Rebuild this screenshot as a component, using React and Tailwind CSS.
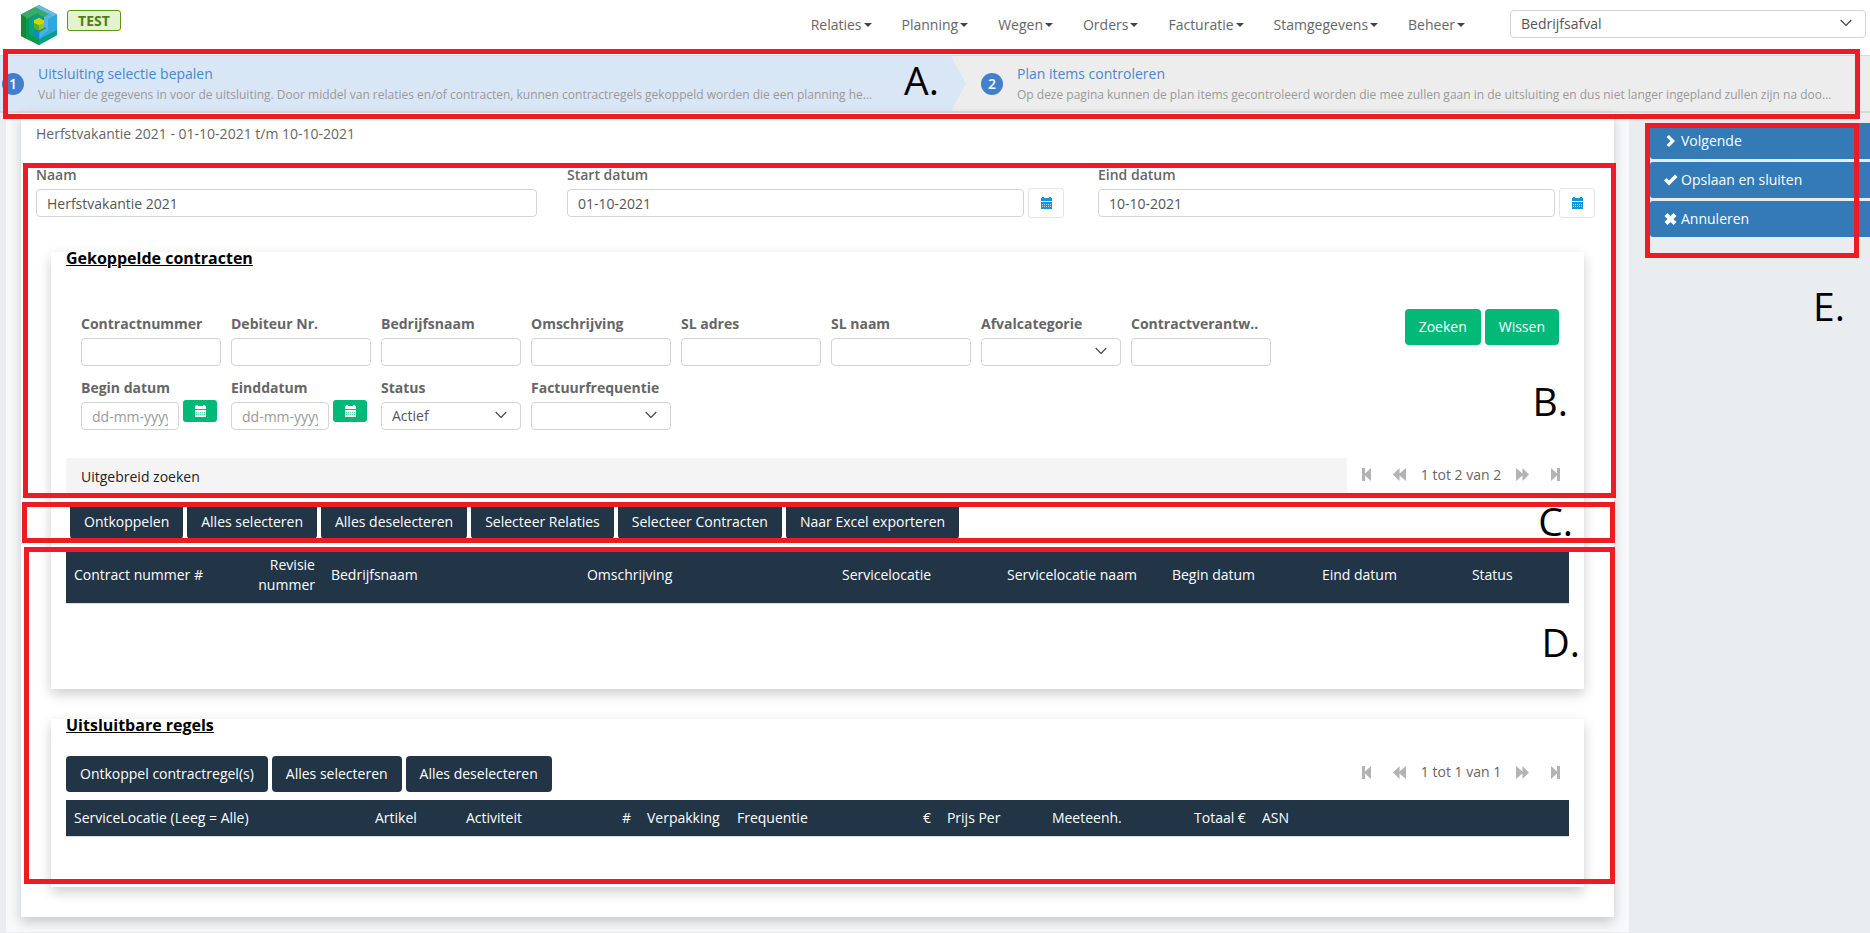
import React from "react";

const fieldBox = "h-7 w-full rounded-[4px] border border-[#d4d4d4] bg-white px-[10px] text-sm text-[#555] placeholder:text-[#999]";
const navy = "h-9 cursor-pointer rounded-[4px] bg-[#213547] px-[14px] pt-px text-sm text-white";
const card = "mx-[30px] bg-white px-[15px] shadow-[0_5px_12px_rgba(0,0,0,0.2)]";

function Logo() {
  return (
    <svg width="36" height="40" viewBox="0 0 36 40" role="img" aria-label="Logo">
      <path d="M18 0 36 9.5V30L18 40 0 31V9.5Z" fill="#129a63" />
      <path d="M0 9.5 5 12V33.500L0 31Z" fill="#128a35" />
      <path d="M0 9.5 14 2 28 9 23 12 16 8.500 5 14V12Z" fill="#3aab66" />
      <path d="M14 2 18 0 36 9.500 31 12 28 9Z" fill="#63bbe8" />
      <path d="M36 9.500V25L18 34.500V29L27 24V12L31 12Z" fill="#2fa8e0" />
      <path d="M28 9 31 12 27 14V24L23 22V12Z" fill="#58b4e6" />
      <path d="M36 25.500V30L18 40V35Z" fill="#00a18a" />
      <path d="M5 33.500 18 40V35L8 30V14L5 14Z" fill="#0a9a4e" />
      <path d="M8 14 16 9.500 23 12 13 17V31L8 29.500Z" fill="#00a28a" />
      <path d="M13.500 24 18.500 27V33.500L13.500 31Z" fill="#1586cf" />
      <path d="M18.500 27 27 22.500V25.500L18.500 33Z" fill="#4cb3e8" />
      <path d="M13 15.500 18 13 23 15.500V23L18 25.500 13 23Z" fill="#9cc21e" />
      <path d="M13 15.500 18 18V25.500L13 23Z" fill="#5cab2c" />
      <path d="M13 15.500 18 13 23 15.500V18L18 20 13 18Z" fill="#d3d800" />
    </svg>
  );
}

function Chevron() {
  return (
    <svg width="12" height="8" viewBox="0 0 12 8" className="pointer-events-none absolute top-[9px] right-[14px]" aria-hidden="true">
      <path d="M.7 1 6 6.500 11.300 1" fill="none" stroke="#444" strokeWidth="1.200" />
    </svg>
  );
}

function Calendar({ color }) {
  return (
    <svg width="11" height="12" viewBox="0 0 11 12" aria-hidden="true">
      <path d="M0 1h1V0h2v1h5V0h2v1h1v3H0Z" fill={color} />
      <path d="M0 5h11v7H0Z" fill={color} />
      <path d="M1 7.500h9M1 9.500h9" stroke={color === "#fff" ? "#03b978" : "#fff"} strokeWidth="1" strokeDasharray="1 1" opacity=".7" />
    </svg>
  );
}

function Select({ id, value, label }) {
  return (
    <div className="relative">
      <select id={id} aria-label={label} className={fieldBox + " appearance-none"} defaultValue={value}>
        <option>{value}</option>
      </select>
      <Chevron />
    </div>
  );
}

const menus = ["Relaties", "Planning", "Wegen", "Orders", "Facturatie", "Stamgegevens", "Beheer"];

function Header() {
  return (
    <header className="flex h-[55px] items-start bg-white pr-1 pl-[21px]">
      <a href="#home" className="mt-[5px]"><Logo /></a>
      <span className="mt-[10px] ml-[10px] flex h-[21px] w-[54px] items-center justify-center rounded-[3px] border border-[#5a9610] bg-[#e3f2cf] text-sm font-bold text-[#4d8010]">TEST</span>
      <nav className="mr-[45px] ml-auto flex h-[50px] items-center gap-[30px]">
        {menus.map((m) => (
          <button key={m} type="button" className="flex cursor-pointer items-center gap-[2px] text-sm text-[#666]">
            {m}
            <svg width="8" height="4" viewBox="0 0 8 4" aria-hidden="true"><path d="M0 0h8L4 4Z" fill="#444" /></svg>
          </button>
        ))}
      </nav>
      <div className="mt-[10px] w-[356px]"><Select id="afdeling" label="Afdeling" value="Bedrijfsafval" /></div>
    </header>
  );
}

function Step({ number, title, text }) {
  return (
    <a href={"#stap-" + number} className="flex min-w-0 items-center">
      <span className="mr-[14px] flex size-[22px] shrink-0 items-center justify-center rounded-full bg-[#4380cc] text-sm font-semibold text-white">{number}</span>
      <span className="block min-w-0 pt-[2px]">
        <span className="block text-sm leading-5 text-[#4a86cf]">{title}</span>
        <span className="block truncate text-[12px] leading-[22px] text-[#999]">{text}</span>
      </span>
    </a>
  );
}

function Wizard() {
  return (
    <div className="flex h-[58px] border-t border-b-2 border-[#d9d9d9] bg-[#ededed]">
      <div className="flex w-[951px] shrink-0 bg-[#d9e6f6] pr-[50px] pl-[2px]">
        <Step number="1" title="Uitsluiting selectie bepalen" text="Vul hier de gegevens in voor de uitsluiting. Door middel van relaties en/of contracten, kunnen contractregels gekoppeld worden die een planning he…" />
      </div>
      <svg width="15" height="55" viewBox="0 0 15 55" className="shrink-0" aria-hidden="true"><path d="M0 0 15 27.500 0 55Z" fill="#d9e6f6" /></svg>
      <div className="flex min-w-0 flex-1 pr-5 pl-[15px]">
        <Step number="2" title="Plan items controleren" text="Op deze pagina kunnen de plan items gecontroleerd worden die mee zullen gaan in de uitsluiting en dus niet langer ingepland zullen zijn na doo…" />
      </div>
    </div>
  );
}

function DateField({ id, label, value }) {
  return (
    <div className="pr-[19px] pl-[15px]">
      <label htmlFor={id} className="block h-6 text-sm leading-5 font-semibold text-[#666]">{label}</label>
      <div className="flex items-center gap-1">
        <input id={id} className={fieldBox} defaultValue={value} />
        <button type="button" aria-label={label + " kiezen"} className="-my-px flex h-[30px] w-9 shrink-0 cursor-pointer items-center justify-center rounded-[3px] border border-[#e5e5e5] bg-white">
          <Calendar color="#1296db" />
        </button>
      </div>
    </div>
  );
}

const filters = [
  ["Contractnummer", "text"], ["Debiteur Nr.", "text"], ["Bedrijfsnaam", "text"], ["Omschrijving", "text"],
  ["SL adres", "text"], ["SL naam", "text"], ["Afvalcategorie", "select", ""], ["Contractverantw..", "text"],
  ["Begin datum", "date"], ["Einddatum", "date"], ["Status", "select", "Actief"], ["Factuurfrequentie", "select", ""],
];

function Filter({ label, kind, value, id }) {
  return (
    <div className="h-16 w-[140px]">
      <label htmlFor={id} className="block h-6 text-sm leading-5 font-bold text-[#666]">{label}</label>
      {kind === "text" && <input id={id} className={fieldBox} />}
      {kind === "select" && <Select id={id} value={value} />}
      {kind === "date" && (
        <div className="flex items-start gap-1">
          <div className="w-[98px]"><input id={id} placeholder="dd-mm-yyyy" className={fieldBox} /></div>
          <button type="button" aria-label={label + " kiezen"} className="-mt-[2px] flex h-[22px] w-[34px] cursor-pointer items-center justify-center rounded-[3px] bg-[#03b978]">
            <Calendar color="#fff" />
          </button>
        </div>
      )}
    </div>
  );
}

function Pager({ text }) {
  const arrow = "flex h-5 cursor-pointer items-center";
  return (
    <div className="flex w-[207px] shrink-0 items-center justify-between pr-[9px] pt-px text-sm text-[#666]">
      <button type="button" aria-label="Eerste" className={arrow}><svg width="9" height="13" viewBox="0 0 9 13"><path d="M0 0h3v5.500L9 0v13L3 7.500V13H0Z" fill="#b3b3b3" /></svg></button>
      <div className="flex items-center gap-[15px]">
        <button type="button" aria-label="Vorige" className={arrow}><svg width="13" height="13" viewBox="0 0 13 13"><path d="M0 6.500 6.500 0v5.500L13 0v13L6.500 7.500V13Z" fill="#b3b3b3" /></svg></button>
        <span>{text}</span>
        <button type="button" aria-label="Volgende" className={arrow}><svg width="13" height="13" viewBox="0 0 13 13"><path d="M13 6.500 6.500 0v5.500L0 0v13L6.500 7.500V13Z" fill="#b3b3b3" /></svg></button>
      </div>
      <button type="button" aria-label="Laatste" className={arrow}><svg width="9" height="13" viewBox="0 0 9 13"><path d="M9 0H6v5.500L0 0v13L6 7.500V13h3Z" fill="#b3b3b3" /></svg></button>
    </div>
  );
}

const contractColumns = [
  ["Contract nummer #", 165], ["Revisie nummer", 92, true], ["Bedrijfsnaam", 256], ["Omschrijving", 255], ["Servicelocatie", 165],
  ["Servicelocatie naam", 165], ["Begin datum", 150], ["Eind datum", 150], ["Status", 105],
];
const lineColumns = [
  ["ServiceLocatie (Leeg = Alle)", 301], ["Artikel", 91], ["Activiteit", 121], ["#", 60, true], ["Verpakking", 90], ["Frequentie", 120],
  ["€", 90, true], ["Prijs Per", 105], ["Meeteenh.", 105], ["Totaal €", 105, true], ["ASN", 315],
];

function HeadTable({ columns, tall, label }) {
  return (
    <table aria-label={label} className="w-full table-fixed border-b border-[#ddd] bg-[#213547] text-sm leading-5 text-white">
      <colgroup>{columns.map(([n, w]) => <col key={n} style={{ width: (w / 15.03) + "%" }} />)}</colgroup>
      <thead>
        <tr className={tall ? "h-[56px]" : "h-[37px]"}>
          {columns.map(([n, , right]) => (
            <th key={n} className={right ? "px-2 text-right font-normal" : "px-2 text-left font-normal whitespace-nowrap"}>{n}</th>
          ))}
        </tr>
      </thead>
    </table>
  );
}

function Buttons({ names }) {
  return (
    <div className="flex gap-1">
      {names.map((n) => <button key={n} type="button" className={navy}>{n}</button>)}
    </div>
  );
}

const actions = [
  ["Volgende", "M2.500 2 5 0 11 6 5 12 2.500 10 6.500 6Z"],
  ["Opslaan en sluiten", "M0 6.500 2.500 4 5 6.500 11 .5 13.500 3 5 11.500Z"],
  ["Annuleren", "M.5 3 3.500 0 6.500 3 9.500 0 12.500 3 9.500 6 12.500 9 9.500 12 6.500 9 3.500 12 .5 9 3.500 6Z"],
];

const frame = "pointer-events-none absolute border-[5px] border-[#ed1c24]";
const mark = "pointer-events-none absolute text-[39px] leading-[40px] text-black";

export default function App() {
  return (
    <div className="relative min-h-screen overflow-hidden bg-[#e9edf0] font-['Open_Sans','Noto_Sans',sans-serif] text-sm">
      <Header />
      <Wizard />
      <div className="flex">
        <main className="ml-[6px] min-w-0 flex-1 bg-[#f7f9fb] px-[15px] pb-[15px]">
          <div className="bg-white pt-[11px] pb-[30px] shadow-[0_5px_12px_rgba(0,0,0,0.2)]">
            <h1 className="px-[15px] text-sm leading-5 text-[#666]">Herfstvakantie 2021 - 01-10-2021 t/m 10-10-2021</h1>
            <div className="mt-[21px] grid grid-cols-3">
              <div className="px-[15px]">
                <label htmlFor="naam" className="block h-6 text-sm leading-5 font-semibold text-[#666]">Naam</label>
                <input id="naam" className={fieldBox} defaultValue="Herfstvakantie 2021" />
              </div>
              <DateField id="start" label="Start datum" value="01-10-2021" />
              <DateField id="eind" label="Eind datum" value="10-10-2021" />
            </div>

            <section className={card + " mt-[35px] pb-[85px]"}>
              <h2 className="text-base leading-3 font-bold text-black underline">Gekoppelde contracten</h2>
              <div className="mt-[45px] flex items-start justify-between pr-[10px] pl-[15px]">
                <div className="mt-[5px] grid grid-cols-[repeat(8,140px)] gap-x-[10px]">
                  {filters.map(([label, kind, value], i) => <Filter key={label} id={"filter-" + i} label={label} kind={kind} value={value} />)}
                </div>
                <div className="flex gap-1">
                  <button type="button" className="h-9 cursor-pointer rounded-[4px] bg-[#03b978] px-[14px] text-white">Zoeken</button>
                  <button type="button" className="h-9 cursor-pointer rounded-[4px] bg-[#03b978] px-[14px] text-white">Wissen</button>
                </div>
              </div>
              <div className="mt-[16px] flex h-9">
                <button type="button" className="flex-1 cursor-pointer bg-[#f4f4f4] px-[15px] pt-px text-left text-[#222]">Uitgebreid zoeken</button>
                <div className="flex pb-1 pl-[15px]"><Pager text="1 tot 2 van 2" /></div>
              </div>
              <div className="mt-[9px] mb-2 px-1">
                <Buttons names={["Ontkoppelen", "Alles selecteren", "Alles deselecteren", "Selecteer Relaties", "Selecteer Contracten", "Naar Excel exporteren"]} />
              </div>
              <HeadTable label="Gekoppelde contracten" columns={contractColumns} tall />
            </section>

            <section className={card + " mt-[30px] pb-[50px]"}>
              <h2 className="text-base leading-3 font-bold text-black underline">Uitsluitbare regels</h2>
              <div className="mt-[25px] mb-2 flex justify-between">
                <Buttons names={["Ontkoppel contractregel(s)", "Alles selecteren", "Alles deselecteren"]} />
                <div className="flex pb-1"><Pager text="1 tot 1 van 1" /></div>
              </div>
              <HeadTable label="Uitsluitbare regels" columns={lineColumns} />
            </section>
          </div>
        </main>
        <aside className="w-[241px] shrink-0 pt-[10px] pl-[21px]">
          <div className="flex flex-col gap-[3px]">
            {actions.map(([name, d]) => (
              <button key={name} type="button" className="flex h-9 cursor-pointer items-center gap-[3px] rounded-l-[3px] bg-[#337ab7] pl-[14px] text-white">
                <svg width="14" height="12" viewBox="0 0 14 12" aria-hidden="true"><path d={d} fill="#fff" /></svg>
                {name}
              </button>
            ))}
          </div>
        </aside>
      </div>

      <div className={frame + " top-[49px] right-[10px] left-[3px] h-[70px]"} />
      <div className={frame + " top-[163px] right-[254px] left-[23px] h-[335px]"} />
      <div className={frame + " top-[502px] right-[255px] left-[22px] h-[41px]"} />
      <div className={frame + " top-[547px] right-[255px] left-[24px] h-[337px]"} />
      <div className={frame + " top-[123px] right-[11px] h-[135px] w-[214px]"} />
      <span className={mark + " top-[60px] left-[904px]"}>A.</span>
      <span className={mark + " top-[381px] right-[302px]"}>B.</span>
      <span className={mark + " top-[501px] right-[297px]"}>C.</span>
      <span className={mark + " top-[622px] right-[290px]"}>D.</span>
      <span className={mark + " top-[286px] right-[25px]"}>E.</span>
    </div>
  );
}
